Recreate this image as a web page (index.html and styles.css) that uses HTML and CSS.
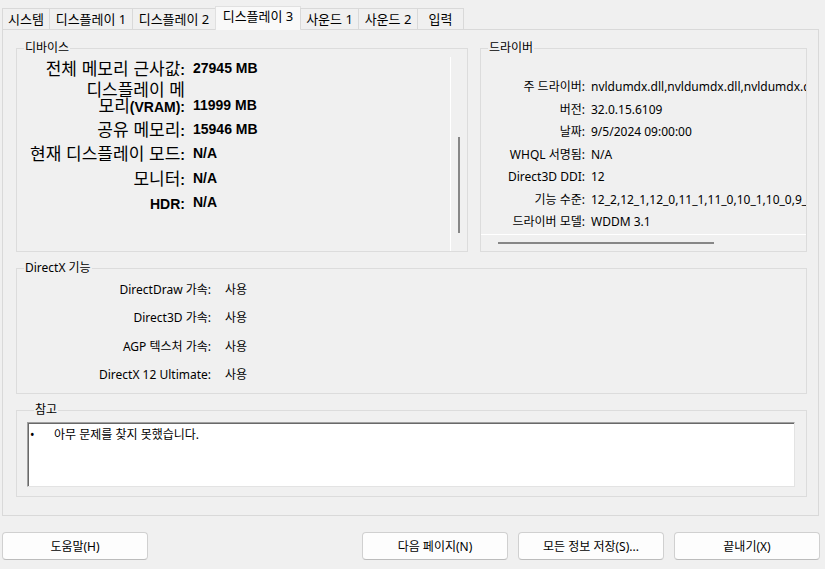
FILE: index.html
```html
<!DOCTYPE html>
<html lang="ko">
<head>
<meta charset="utf-8">
<title>DirectX 진단 도구</title>
<link rel="stylesheet" href="styles.css">
</head>
<body>
<div class="tabs">
  <div class="tab t-sys">시스템</div>
  <div class="tab t-disp">디스플레이 1</div>
  <div class="tab t-disp">디스플레이 2</div>
  <div class="tab t-disp active">디스플레이 3</div>
  <div class="tab t-snd">사운드 1</div>
  <div class="tab t-snd2">사운드 2</div>
  <div class="tab t-in">입력</div>
</div>
<div class="panel">
  <div class="top-row">
    <fieldset class="group device">
      <legend>디바이스</legend>
      <div class="dev-body">
        <div class="dev-list">
          <div class="dev-row"><div class="dev-label">전체 메모리 근사값<span class="lt">:</span></div><div class="dev-val">27945 MB</div></div>
          <div class="dev-row two"><div class="dev-label">디스플레이 메<br>모리<span class="lt">(VRAM):</span></div><div class="dev-val">11999 MB</div></div>
          <div class="dev-row"><div class="dev-label">공유 메모리<span class="lt">:</span></div><div class="dev-val">15946 MB</div></div>
          <div class="dev-row"><div class="dev-label">현재 디스플레이 모드<span class="lt">:</span></div><div class="dev-val">N/A</div></div>
          <div class="dev-row"><div class="dev-label">모니터<span class="lt">:</span></div><div class="dev-val">N/A</div></div>
          <div class="dev-row"><div class="dev-label"><span class="lt">HDR:</span></div><div class="dev-val">N/A</div></div>
        </div>
        <div class="vscroll"><div class="vthumb"></div></div>
      </div>
    </fieldset>
    <fieldset class="group driver">
      <legend>드라이버</legend>
      <div class="drv-view">
        <div class="drv-row"><span class="drv-label">주 드라이버:</span><span class="drv-val">nvldumdx.dll,nvldumdx.dll,nvldumdx.dll,nvldumdx.dll</span></div>
        <div class="drv-row"><span class="drv-label">버전:</span><span class="drv-val">32.0.15.6109</span></div>
        <div class="drv-row"><span class="drv-label">날짜:</span><span class="drv-val">9/5/2024 09:00:00</span></div>
        <div class="drv-row"><span class="drv-label">WHQL 서명됨:</span><span class="drv-val">N/A</span></div>
        <div class="drv-row"><span class="drv-label">Direct3D DDI:</span><span class="drv-val">12</span></div>
        <div class="drv-row"><span class="drv-label">기능 수준:</span><span class="drv-val">12_2,12_1,12_0,11_1,11_0,10_1,10_0,9_3,9_2,9_1</span></div>
        <div class="drv-row"><span class="drv-label">드라이버 모델:</span><span class="drv-val">WDDM 3.1</span></div>
      </div>
      <div class="hscroll"><div class="hthumb"></div></div>
    </fieldset>
  </div>
  <fieldset class="group dx">
    <legend>DirectX 기능</legend>
    <div class="dx-grid">
      <div class="dx-label">DirectDraw 가속:</div><div class="dx-val">사용</div>
      <div class="dx-label">Direct3D 가속:</div><div class="dx-val">사용</div>
      <div class="dx-label">AGP 텍스처 가속:</div><div class="dx-val">사용</div>
      <div class="dx-label">DirectX 12 Ultimate:</div><div class="dx-val">사용</div>
    </div>
  </fieldset>
  <fieldset class="group notes">
    <legend>참고</legend>
    <div class="notes-box">
      <div class="note-line"><span class="bullet">•</span><span>아무 문제를 찾지 못했습니다.</span></div>
    </div>
  </fieldset>
</div>
<div class="buttons">
  <button class="btn">도움말(H)</button>
  <div class="spacer"></div>
  <button class="btn">다음 페이지(N)</button>
  <button class="btn">모든 정보 저장(S)...</button>
  <button class="btn">끝내기(X)</button>
</div>
</body>
</html>
```

FILE: styles.css
```css
* { box-sizing: border-box; }

body {
  margin: 0;
  width: 825px;
  height: 569px;
  overflow: hidden;
  background: #f0f0f0;
  color: #000;
  font-family: "Noto Sans", "Noto Sans CJK KR", sans-serif;
  font-size: 12px;
  line-height: 16px;
}

/* tabs */
.tabs {
  display: flex;
  align-items: flex-end;
  height: 23px;
  margin-top: 6px;
  padding-left: 2px;
  position: relative;
  z-index: 1;
}
.tab {
  height: 21px;
  padding-top: 2px;
  border: 1px solid #d9d9d9;
  border-bottom: none;
  margin-right: -1px;
  background: #f0f0f0;
  white-space: nowrap;
  font-size: 13px;
  line-height: 16px;
  text-align: center;
}
.t-sys { width: 48px; }
.t-disp { width: 84px; }
.t-snd { width: 59px; }
.t-snd2 { width: 60px; }
.t-in { width: 47px; }
.tab.active {
  width: 86px;
  height: 24px;
  margin-bottom: -1px;
  padding-top: 1px;
  background: #f9f9f9;
  border-color: #e0e0e0;
}

/* panel */
.panel {
  margin: 0 6px 0 2px;
  border: 1px solid #d9d9d9;
  padding: 10px 11px 18px 13px;
  display: flex;
  flex-direction: column;
  gap: 8px;
}

.group {
  margin: 0;
  padding: 0;
  min-width: 0;
  border: 1px solid #dcdcdc;
}
.group legend {
  margin-left: 7px;
  padding: 0 1px;
  font-size: 12px;
  line-height: 16px;
}

.top-row {
  display: flex;
  gap: 12px;
}

/* device */
.device { width: 452px; flex: none; }
.dev-body {
  display: flex;
  height: 194px;
  margin-top: 1px;
}
.dev-list {
  flex: 1;
  border-right: 1px solid #ffffff;
  padding-top: 2px;
  display: flex;
  flex-direction: column;
  gap: 6.5px;
}
.dev-row {
  display: flex;
  align-items: flex-end;
}
.dev-label {
  width: 168px;
  flex: none;
  text-align: right;
  font-family: "Noto Sans CJK KR", sans-serif;
  font-size: 17px;
  line-height: 18px;
  white-space: nowrap;
}
.dev-row.two { margin-top: -2.5px; }
.dev-row.two .dev-label { line-height: 16px; }
.dev-row.two .dev-val { line-height: 16px; }
.lt {
  font-family: "Liberation Sans", sans-serif;
  font-weight: bold;
  font-size: 14px;
  line-height: 10px;
}
.dev-val {
  margin-left: 8px;
  font-family: "Liberation Sans", sans-serif;
  font-weight: bold;
  font-size: 14px;
  line-height: 18px;
  white-space: nowrap;
}
.vscroll { width: 16px; flex: none; }
.vthumb {
  width: 2px;
  height: 96px;
  margin: 80px 0 0 7px;
  background: #878787;
}

/* driver */
.driver { flex: 1; }
.drv-view {
  padding-top: 20px;
  border-bottom: 1px solid #ffffff;
  overflow: hidden;
}
.drv-row {
  display: flex;
  line-height: 22.5px;
  white-space: nowrap;
}
.drv-label {
  width: 104px;
  flex: none;
  text-align: right;
}
.drv-val { margin-left: 6px; }
.hscroll {
  height: 16px;
  padding: 7px 0 0 17px;
}
.hthumb {
  width: 216px;
  height: 2px;
  background: #878787;
}

/* directx */
.dx-grid {
  display: grid;
  grid-template-columns: 194px 1fr;
  column-gap: 14px;
  grid-auto-rows: 28.3px;
  align-items: center;
  padding-bottom: 4px;
}
.dx-label { text-align: right; white-space: nowrap; }

/* notes */
.notes { padding: 0 11px 9px 10px; }
.notes-box {
  margin-top: 4px;
  height: 65px;
  background: #ffffff;
  border: 1px solid;
  border-color: #a0a0a0 #e3e3e3 #e3e3e3 #a0a0a0;
  box-shadow: inset 1px 1px 0 #696969;
  padding: 4px 0 0 2px;
}
.note-line { display: flex; line-height: 16px; }
.bullet { width: 24px; flex: none; }

/* buttons */
.buttons {
  display: flex;
  gap: 10px;
  margin-top: 16px;
  padding: 0 5px 0 2px;
}
.spacer { flex: 1; }
.btn {
  width: 146px;
  height: 28px;
  border: 1px solid #d0d0d0;
  border-bottom-color: #bcbcbc;
  border-radius: 4px;
  background: #fdfdfd;
  font-family: "Noto Sans", "Noto Sans CJK KR", sans-serif;
  font-size: 12px;
  color: #000;
  padding: 0;
}
```
